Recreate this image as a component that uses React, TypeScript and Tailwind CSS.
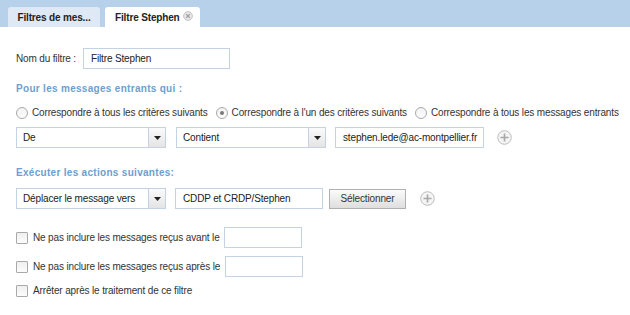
import { ReactNode } from "react";

const font = "font-[family-name:'Liberation_Sans',Arial,sans-serif]";

function Select({ value }: { value: string }) {
  return (
    <div className="flex h-[21px] w-[150px] border border-[#c3d3e3] bg-white">
      <span className="flex flex-1 items-center pl-[6px] text-[#222]">{value}</span>
      <span className="flex w-[17px] items-center justify-center border-l border-[#c3d3e3] bg-gradient-to-b from-[#fbfbfb] to-[#e4e4e4]">
        <svg width="7" height="4" viewBox="0 0 7 4">
          <path d="M0 0h7L3.5 4z" fill="#222" />
        </svg>
      </span>
    </div>
  );
}

function TextInput({ value = "", w }: { value?: string; w: string }) {
  return (
    <div className={`flex h-[21px] items-center border border-[#c3d3e3] bg-white pl-[7px] text-[#222] ${w}`}>
      {value}
    </div>
  );
}

function Plus() {
  return (
    <svg width="15" height="15" viewBox="0 0 15 15">
      <circle cx="7.5" cy="7.5" r="6.8" fill="#f4f4f4" stroke="#bdbdbd" />
      <path d="M7.5 3.5v8M3.5 7.5h8" stroke="#a8a8a8" strokeWidth="1.6" />
    </svg>
  );
}

function Radio({ checked, children }: { checked?: boolean; children: ReactNode }) {
  return (
    <label className="flex items-center gap-[4px] whitespace-nowrap">
      <span className="flex h-[12px] w-[12px] items-center justify-center rounded-full border border-[#a9a9a9] bg-gradient-to-b from-[#f2f2f2] to-[#fdfdfd]">
        {checked && <span className="h-[4px] w-[4px] rounded-full bg-[#7a7a7a]" />}
      </span>
      <span>{children}</span>
    </label>
  );
}

function Check({ children }: { children: ReactNode }) {
  return (
    <label className="flex items-center gap-[5px] whitespace-nowrap">
      <span className="h-[12px] w-[12px] rounded-[1px] border border-[#a9a9a9] bg-gradient-to-b from-[#efefef] to-[#fcfcfc]" />
      <span>{children}</span>
    </label>
  );
}

export default function App() {
  return (
    <div className={`h-[315px] w-[630px] overflow-hidden bg-white text-[10px] tracking-[-0.15px] text-[#333] ${font}`}>
      <div className="flex h-[27px] items-end gap-[5px] bg-[#b8d1ea] pl-[8px]">
        <div className="flex h-[20px] w-[92px] items-center justify-center rounded-t-[3px] bg-[#dfe9f5] font-bold text-[#222]">
          Filtres de mes...
        </div>
        <div className="flex h-[20px] w-[95px] items-center gap-[3px] whitespace-nowrap rounded-t-[3px] bg-white pl-[10px] font-bold text-[#222]">
          Filtre Stephen
          <svg width="10" height="10" viewBox="0 0 10 10" className="mb-[3px]">
            <circle cx="5" cy="5" r="4.4" fill="#e6e6e6" stroke="#c4c4c4" />
            <path d="M3.2 3.2l3.6 3.6M6.8 3.2L3.2 6.8" stroke="#9a9a9a" strokeWidth="1.1" />
          </svg>
        </div>
      </div>

      <div className="px-[16px]">
        <div className="mt-[21px] flex items-center gap-[7px]">
          <span>Nom du filtre :</span>
          <TextInput value="Filtre Stephen" w="w-[147px]" />
        </div>

        <div className="mt-[12px] font-bold tracking-[0.3px] text-[#6b9fd1]">Pour les messages entrants qui :</div>

        <div className="mt-[9px] flex items-center gap-[8px]">
          <Radio>Correspondre à tous les critères suivants</Radio>
          <Radio checked>Correspondre à l'un des critères suivants</Radio>
          <Radio>Correspondre à tous les messages entrants</Radio>
        </div>

        <div className="mt-[7px] flex items-center">
          <Select value="De" />
          <div className="ml-[10px]">
            <Select value="Contient" />
          </div>
          <div className="ml-[9px]">
            <TextInput value="stephen.lede@ac-montpellier.fr" w="w-[149px]" />
          </div>
          <div className="ml-[13px]">
            <Plus />
          </div>
        </div>

        <div className="mt-[17px] font-bold tracking-[0.3px] text-[#6b9fd1]">Exécuter les actions suivantes:</div>

        <div className="mt-[8px] flex items-center">
          <Select value="Déplacer le message vers" />
          <div className="ml-[9px]">
            <TextInput value="CDDP et CRDP/Stephen" w="w-[148px]" />
          </div>
          <button className="ml-[6px] h-[20px] w-[77px] border border-[#b0b0b0] bg-gradient-to-b from-[#fbfbfb] to-[#dedede] text-[#333]">
            Sélectionner
          </button>
          <div className="ml-[14px]">
            <Plus />
          </div>
        </div>

        <div className="mt-[18px] flex items-center gap-[4px]">
          <Check>Ne pas inclure les messages reçus avant le</Check>
          <TextInput w="w-[78px]" />
        </div>
        <div className="mt-[8px] flex items-center gap-[5px]">
          <Check>Ne pas inclure les messages reçus après le</Check>
          <TextInput w="w-[78px]" />
        </div>
        <div className="mt-[6px]">
          <Check>Arrêter après le traitement de ce filtre</Check>
        </div>
      </div>
    </div>
  );
}
